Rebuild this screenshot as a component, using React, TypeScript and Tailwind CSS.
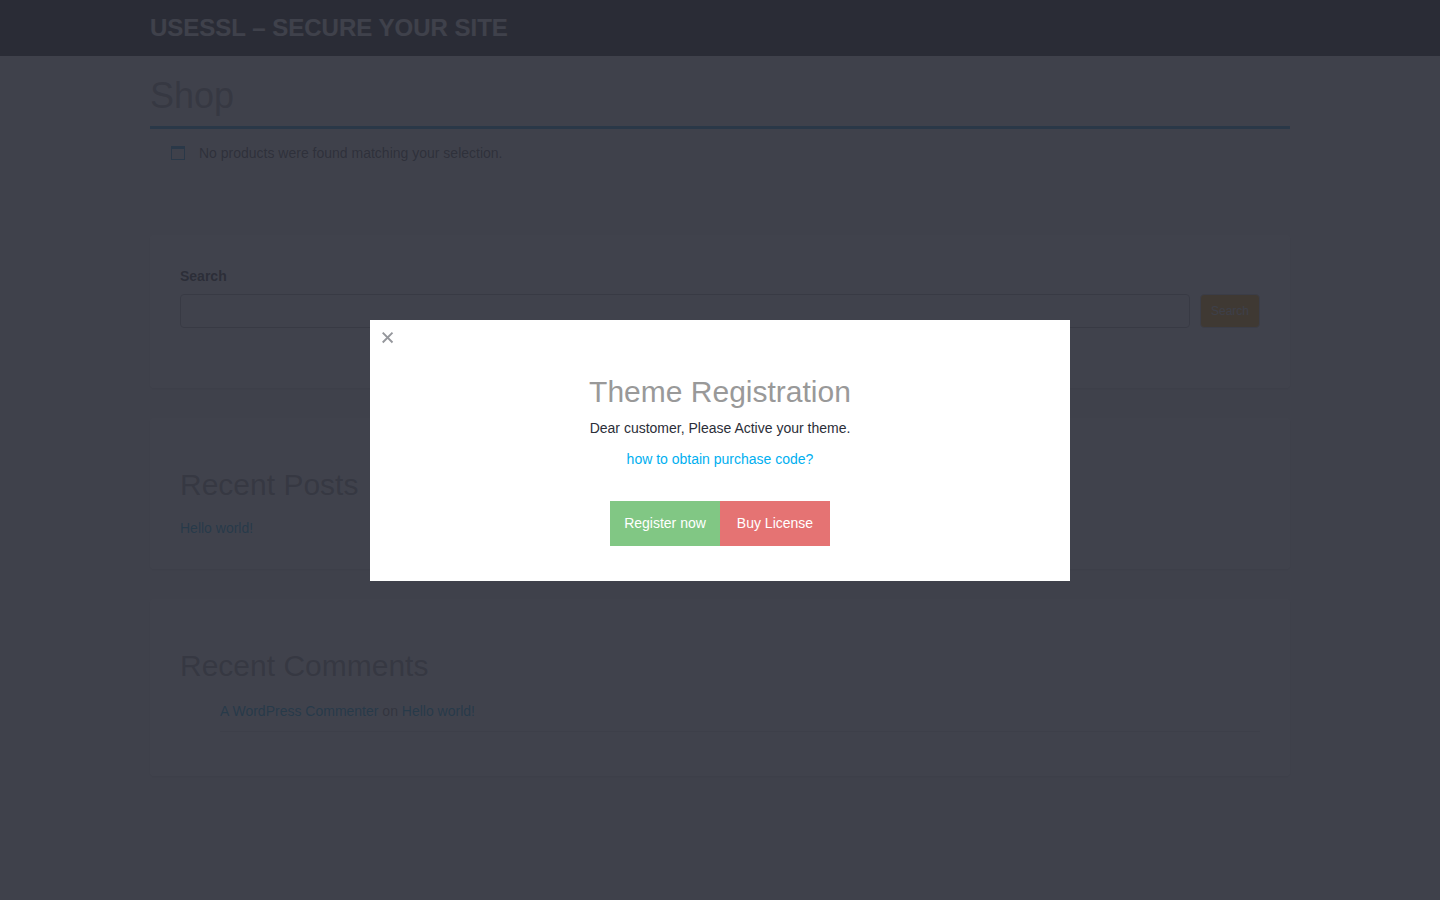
import type { ReactNode } from "react";

function Card({ children, className = "" }: { children: ReactNode; className?: string }) {
  return (
    <section
      className={`rounded-sm bg-white px-[30px] shadow-[0_1px_3px_rgba(0,0,0,0.15)] ${className}`}
    >
      {children}
    </section>
  );
}

function WindowIcon() {
  return (
    <svg width="14" height="14" viewBox="0 0 14 14" aria-hidden="true" className="text-[#1e9bd0]">
      <path d="M0 0h14v14H0V0zm1 3v10h12V3H1z" fill="currentColor" fillRule="evenodd" />
    </svg>
  );
}

function RegistrationDialog() {
  return (
    <div className="fixed inset-0 flex items-center justify-center bg-[#2b2e38]/90">
      <div
        role="dialog"
        aria-modal="true"
        aria-labelledby="registration-title"
        className="relative w-full max-w-[700px] bg-white px-9 pt-[55px] pb-[35px] text-center text-[#2b2e38]"
      >
        <button
          type="button"
          aria-label="Close"
          className="absolute top-0 left-0 flex size-9 items-center justify-center text-[#95979c]"
        >
          <svg width="12" height="12" viewBox="0 0 12 12" aria-hidden="true">
            <path d="M0.7 0.7l9.8 9.8M10.5 0.7l-9.8 9.8" stroke="currentColor" strokeWidth="1.9" />
          </svg>
        </button>
        <h2 id="registration-title" className="text-[30px] leading-[33px] text-[#999]">
          Theme Registration
        </h2>
        <p className="mt-2.5 leading-5">Dear customer, Please Active your theme.</p>
        <p className="mt-[11px] leading-5">
          <a href="#purchase-code" className="text-[#00aff0]">
            how to obtain purchase code?
          </a>
        </p>
        <div className="mt-8 flex justify-center text-white">
          <button type="button" className="h-[45px] w-[110px] bg-[#81c784]">
            Register now
          </button>
          <button type="button" className="h-[45px] w-[110px] bg-[#e57373]">
            Buy License
          </button>
        </div>
      </div>
    </div>
  );
}

export default function App() {
  return (
    <div className="min-h-screen bg-[#f5f5f5] font-['Liberation_Sans',Arial,sans-serif] text-sm leading-5 text-[#333]">
      <header className="bg-[#222]">
        <div className="mx-auto flex h-14 max-w-[1140px] items-center">
          <a href="#home" className="text-2xl font-bold text-[#f5f5f0]">
            USESSL – SECURE YOUR SITE
          </a>
        </div>
      </header>

      <main className="mx-auto max-w-[1140px]">
        <h1 className="pt-5 pb-2.5 text-[36px] leading-10 text-[#999]">Shop</h1>
        <p className="flex items-center gap-3.5 border-t-[3px] border-[#1e9bd0] px-[21px] pt-3.5 text-[#515151]">
          <WindowIcon />
          No products were found matching your selection.
        </p>

        <div className="mt-[72px] flex flex-col gap-[30px]">
          <Card className="pt-[31px] pb-[60px]">
            <form>
              <label htmlFor="site-search" className="block font-bold">
                Search
              </label>
              <div className="mt-2 flex gap-2.5">
                <input
                  id="site-search"
                  type="search"
                  className="h-[34px] min-w-0 flex-1 rounded border border-[#aaa] bg-white px-3"
                />
                <button
                  type="button"
                  className="h-[34px] w-[60px] rounded border border-[#ccc] bg-[#f5a500] text-xs text-[#ddd]"
                >
                  Search
                </button>
              </div>
            </form>
          </Card>

          <Card className="pt-[50px] pb-[31px]">
            <h2 className="text-[30px] leading-[33px] text-[#999]">Recent Posts</h2>
            <p className="mt-[17px]">
              <a href="#hello-world" className="text-[#00a8e0]">
                Hello world!
              </a>
            </p>
          </Card>

          <Card className="pt-[50px] pb-11">
            <h2 className="text-[30px] leading-[33px] text-[#999]">Recent Comments</h2>
            <ul className="mt-[19px] pl-10">
              <li className="border-b border-[#ddd] pb-2.5 text-[#777]">
                <a href="#commenter" className="text-[#00a8e0]">
                  A WordPress Commenter
                </a>{" "}
                on{" "}
                <a href="#hello-world" className="text-[#00a8e0]">
                  Hello world!
                </a>
              </li>
            </ul>
          </Card>
        </div>
      </main>

      <RegistrationDialog />
    </div>
  );
}
